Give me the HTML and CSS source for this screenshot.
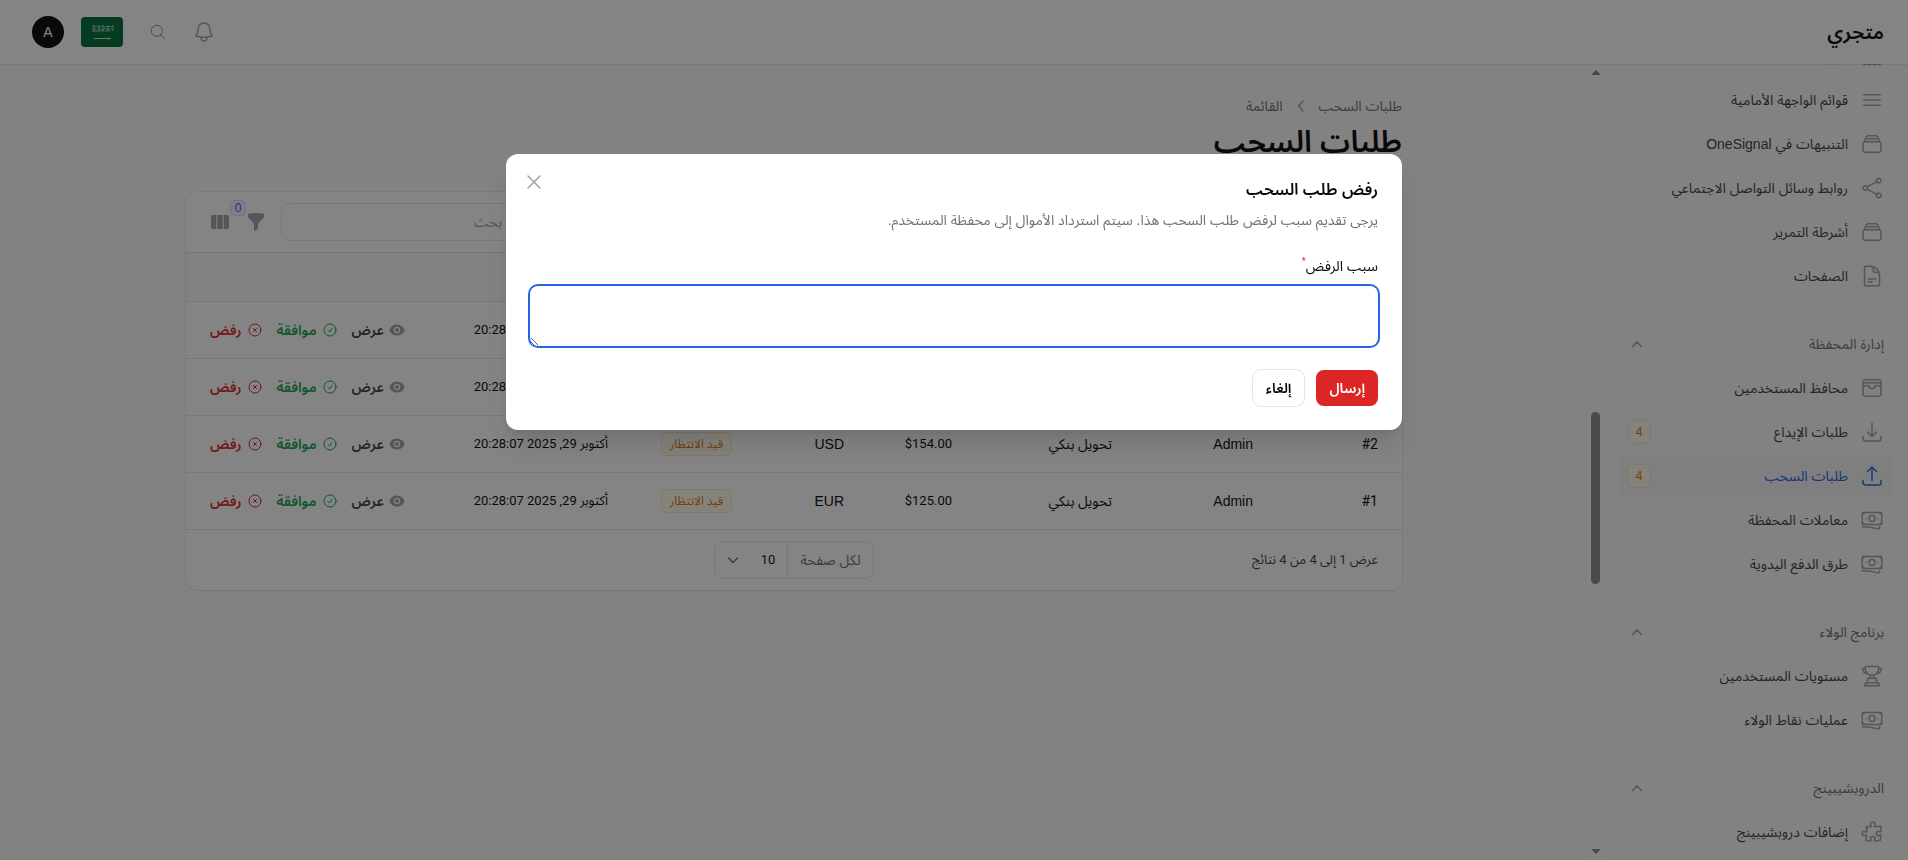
FILE: index.html
```html
<!DOCTYPE html>
<html lang="ar" dir="rtl">
<head>
  <meta charset="UTF-8">
  <meta name="viewport" content="width=device-width, initial-scale=1.0">
  <title>طلبات السحب - متجري</title>
  <link rel="stylesheet" href="styles.css">
</head>
<body>
  <svg class="sprite" aria-hidden="true">
    <symbol id="i-ticket" viewBox="0 0 24 24"><path d="M4 3.5h16v17.4l-2.7-1.3-2.7 1.5-2.6-1.5-2.6 1.5-2.7-1.5L4 20.9z"/></symbol>
    <symbol id="i-bars" viewBox="0 0 24 24"><path d="M3.75 6.75h16.5M3.75 12h16.5m-16.5 5.25h16.5"/></symbol>
    <symbol id="i-stack" viewBox="0 0 24 24"><path d="M6 6.878V6a2.25 2.25 0 012.25-2.25h7.5A2.25 2.25 0 0118 6v.878m-12 0c.235-.083.487-.128.75-.128h10.5c.263 0 .515.045.75.128m-12 0A2.25 2.25 0 004.5 9v.878m13.5-3A2.25 2.25 0 0119.5 9v.878m0 0a2.246 2.246 0 00-.75-.128H5.25c-.263 0-.515.045-.75.128m15 0A2.25 2.25 0 0121 12v6a2.25 2.25 0 01-2.25 2.25H5.25A2.25 2.25 0 013 18v-6c0-.98.626-1.813 1.5-2.122"/></symbol>
    <symbol id="i-share" viewBox="0 0 24 24"><path d="M7.217 10.907a2.25 2.25 0 100 2.186m0-2.186c.18.324.283.696.283 1.093s-.103.77-.283 1.093m0-2.186l9.566-5.314m-9.566 7.5l9.566 5.314m0 0a2.25 2.25 0 103.935 2.186 2.25 2.25 0 00-3.935-2.186zm0-12.814a2.25 2.25 0 103.933-2.185 2.25 2.25 0 00-3.933 2.185z"/></symbol>
    <symbol id="i-document" viewBox="0 0 24 24"><path d="M19.5 14.25v-2.625a3.375 3.375 0 00-3.375-3.375h-1.5A1.125 1.125 0 0113.5 7.125v-1.5a3.375 3.375 0 00-3.375-3.375H8.25m0 12.75h7.5m-7.5 3H12M10.5 2.25H5.625c-.621 0-1.125.504-1.125 1.125v17.25c0 .621.504 1.125 1.125 1.125h12.75c.621 0 1.125-.504 1.125-1.125V11.25a9 9 0 00-9-9z"/></symbol>
    <symbol id="i-wallet" viewBox="0 0 24 24"><path d="M21 12a2.25 2.25 0 00-2.25-2.25H15a3 3 0 11-6 0H5.25A2.25 2.25 0 003 12m18 0v6a2.25 2.25 0 01-2.25 2.25H5.25A2.25 2.25 0 013 18v-6m18 0V9M3 12V9m18 0a2.25 2.25 0 00-2.25-2.25H5.25A2.25 2.25 0 003 9m18 0V6a2.25 2.25 0 00-2.25-2.25H5.25A2.25 2.25 0 003 6v3"/></symbol>
    <symbol id="i-download" viewBox="0 0 24 24"><path d="M3 16.5v2.25A2.25 2.25 0 005.25 21h13.5A2.25 2.25 0 0021 18.75V16.5M16.5 12L12 16.5m0 0L7.5 12m4.5 4.5V3"/></symbol>
    <symbol id="i-upload" viewBox="0 0 24 24"><path d="M3 16.5v2.25A2.25 2.25 0 005.25 21h13.5A2.25 2.25 0 0021 18.75V16.5m-13.5-9L12 3m0 0l4.5 4.5M12 3v13.5"/></symbol>
    <symbol id="i-banknotes" viewBox="0 0 24 24"><path d="M2.25 18.75a60.07 60.07 0 0115.797 2.101c.727.198 1.453-.342 1.453-1.096V18.75M3.75 4.5v.75A.75.75 0 013 6h-.75m0 0v-.375c0-.621.504-1.125 1.125-1.125H20.25M2.25 6v9m18-10.5v.75c0 .414.336.75.75.75h.75m-1.5-1.5h.375c.621 0 1.125.504 1.125 1.125v9.75c0 .621-.504 1.125-1.125 1.125h-.375m1.5-1.5H21a.75.75 0 00-.75.75v.75m0 0H3.75m0 0h-.375a1.125 1.125 0 01-1.125-1.125V15m1.5 1.5v-.75A.75.75 0 003 15h-.75M15 10.5a3 3 0 11-6 0 3 3 0 016 0zm3 0h.008v.008H18V10.5zm-12 0h.008v.008H6V10.5z"/></symbol>
    <symbol id="i-trophy" viewBox="0 0 24 24"><path d="M16.5 18.75h-9m9 0a3 3 0 013 3h-15a3 3 0 013-3m9 0v-3.375c0-.621-.503-1.125-1.125-1.125h-.871M7.5 18.75v-3.375c0-.621.504-1.125 1.125-1.125h.872m5.007 0H9.497m5.007 0a7.454 7.454 0 01-.982-3.172M9.497 14.25a7.454 7.454 0 00.981-3.172M5.25 4.236c-.982.143-1.954.317-2.916.52A6.003 6.003 0 007.73 9.728M5.25 4.236V4.5c0 2.108.966 3.99 2.48 5.228M5.25 4.236V2.721C7.456 2.41 9.71 2.25 12 2.25c2.291 0 4.545.16 6.75.47v1.516M7.73 9.728a6.726 6.726 0 002.748 1.35m8.272-6.842V4.5c0 2.108-.966 3.99-2.48 5.228m2.48-5.492a46.32 46.32 0 012.916.52 6.003 6.003 0 01-5.395 4.972m0 0a6.726 6.726 0 01-2.749 1.35m0 0a6.772 6.772 0 01-3.044 0"/></symbol>
    <symbol id="i-puzzle" viewBox="0 0 24 24"><path d="M14.25 6.087c0-.355.186-.676.401-.959.221-.29.349-.634.349-1.003 0-1.036-1.007-1.875-2.25-1.875s-2.25.84-2.25 1.875c0 .369.128.713.349 1.003.215.283.401.604.401.959v0a.64.64 0 01-.657.643 48.39 48.39 0 01-4.163-.3c.186 1.613.293 3.25.315 4.907a.656.656 0 01-.658.663v0c-.355 0-.676-.186-.959-.401a1.647 1.647 0 00-1.003-.349c-1.036 0-1.875 1.007-1.875 2.25s.84 2.25 1.875 2.25c.369 0 .713-.128 1.003-.349.283-.215.604-.401.959-.401v0c.31 0 .555.26.532.57a48.039 48.039 0 01-.642 5.056c1.518.19 3.058.309 4.616.354a.64.64 0 00.657-.643v0c0-.355-.186-.676-.401-.959a1.647 1.647 0 01-.349-1.003c0-1.035 1.008-1.875 2.25-1.875 1.243 0 2.25.84 2.25 1.875 0 .369-.128.713-.349 1.003-.215.283-.4.604-.4.959v0c0 .333.277.599.61.58a48.1 48.1 0 005.427-.63 48.05 48.05 0 00.582-4.717.532.532 0 00-.533-.57v0c-.355 0-.676.186-.959.401-.29.221-.634.349-1.003.349-1.035 0-1.875-1.007-1.875-2.25s.84-2.25 1.875-2.25c.37 0 .713.128 1.003.349.283.215.604.401.96.401v0a.656.656 0 00.658-.663 48.422 48.422 0 00-.37-5.36c-1.886.342-3.81.574-5.766.689a.578.578 0 01-.61-.58v0z"/></symbol>
    <symbol id="i-bell" viewBox="0 0 24 24"><path d="M14.857 17.082a23.848 23.848 0 005.454-1.31A8.967 8.967 0 0118 9.75v-.7V9A6 6 0 006 9v.75a8.967 8.967 0 01-2.312 6.022c1.733.64 3.56 1.085 5.455 1.31m5.714 0a24.255 24.255 0 01-5.714 0m5.714 0a3 3 0 11-5.714 0"/></symbol>
    <symbol id="i-search" viewBox="0 0 24 24"><path d="M21 21l-5.197-5.197m0 0A7.5 7.5 0 105.196 5.196a7.5 7.5 0 0010.607 10.607z"/></symbol>
    <symbol id="i-check" viewBox="0 0 24 24"><path d="M9 12.75L11.25 15 15 9.75M21 12a9 9 0 11-18 0 9 9 0 0118 0z"/></symbol>
    <symbol id="i-reject" viewBox="0 0 24 24"><path d="M9.75 9.75l4.5 4.5m0-4.5l-4.5 4.5M21 12a9 9 0 11-18 0 9 9 0 0118 0z"/></symbol>
    <symbol id="i-close" viewBox="0 0 24 24"><path d="M6 18L18 6M6 6l12 12"/></symbol>
    <symbol id="i-up" viewBox="0 0 20 20"><path d="M5.5 12.5L10 8l4.5 4.5"/></symbol>
    <symbol id="i-down" viewBox="0 0 20 20"><path d="M5.5 8L10 12.5 14.5 8"/></symbol>
    <symbol id="i-left" viewBox="0 0 20 20"><path d="M12 5l-4.500 5 4.500 5"/></symbol>
    <symbol id="i-eye" viewBox="0 0 20 20"><path d="M10 12.5a2.5 2.5 0 100-5 2.5 2.5 0 000 5z"/><path fill-rule="evenodd" d="M.664 10.59a1.651 1.651 0 010-1.186A10.004 10.004 0 0110 3c4.257 0 7.893 2.66 9.336 6.41.147.381.146.804 0 1.186A10.004 10.004 0 0110 17c-4.257 0-7.893-2.66-9.336-6.41zM14 10a4 4 0 11-8 0 4 4 0 018 0z"/></symbol>
    <symbol id="i-funnel" viewBox="0 0 20 20"><path d="M2.628 1.601C5.028 1.206 7.49 1 10 1s4.973.206 7.372.601a.75.75 0 01.628.74v2.288a2.25 2.25 0 01-.659 1.59l-4.682 4.683a2.25 2.25 0 00-.659 1.59v3.037c0 .684-.31 1.33-.844 1.757l-1.937 1.55A.75.75 0 018 18.25v-5.757a2.25 2.25 0 00-.659-1.591L2.659 6.22A2.25 2.25 0 012 4.629V2.34a.75.75 0 01.628-.74z"/></symbol>
    <symbol id="i-columns" viewBox="0 0 20 20"><path d="M2.500 3H6.300v14H2.500A1.500 1.500 0 011 15.500v-11A1.500 1.500 0 012.500 3zM7.300 3h5.400v14h-5.400zM13.700 3h3.800A1.500 1.500 0 0119 4.500v11a1.500 1.500 0 01-1.500 1.500h-3.800z"/></symbol>
  </svg>

  <header class="topbar">
    <a class="brand" href="#">متجري</a>
    <div class="topbar-tools">
      <button class="icon-btn" aria-label="الإشعارات"><svg class="icon"><use href="#i-bell"/></svg></button>
      <button class="icon-btn" aria-label="بحث"><svg class="icon icon-search"><use href="#i-search"/></svg></button>
      <button class="flag" aria-label="العربية">
        <svg viewBox="0 0 42 30">
          <rect width="42" height="30" fill="#006c35"/>
          <path d="M11 8.500c1 2 2-1 3 1s2-2 3 0 2-1 3 0 2-2 3 0 2-1 3 0 2-1 3 0 2-1 3 0M11 12c1 1 2-1 3 0s2 2 3 0 2 1 3 0 2 2 3 0 2 1 3 0 2 1 3 0 2 1 3 0M11 14c1 1 2-1 3 0s2 1 3 0 2 1 3 0 2 1 3 0 2 1 3 0 2 1 3 0M13 8v6M18 8v6M22 8v6M27 8v6M32 8v6" fill="none" stroke="#fff" stroke-width=".6"/>
          <path d="M13 21.500h14m0-1v2m0-1h3" fill="none" stroke="#fff" stroke-width=".8"/>
        </svg>
      </button>
      <button class="avatar">A</button>
    </div>
  </header>

  <div class="layout">
    <aside class="sidebar">
      <nav class="nav">
        <ul class="nav-items">
          <li><a href="#"><svg class="icon"><use href="#i-ticket"/></svg>كوبونات</a></li>
          <li><a href="#"><svg class="icon"><use href="#i-bars"/></svg>قوائم الواجهة الأمامية</a></li>
          <li><a href="#"><svg class="icon"><use href="#i-stack"/></svg>التنبيهات في OneSignal</a></li>
          <li><a href="#"><svg class="icon"><use href="#i-share"/></svg>روابط وسائل التواصل الاجتماعي</a></li>
          <li><a href="#"><svg class="icon"><use href="#i-stack"/></svg>أشرطة التمرير</a></li>
          <li><a href="#"><svg class="icon"><use href="#i-document"/></svg>الصفحات</a></li>
        </ul>
        <section>
          <button class="nav-title">إدارة المحفظة<svg class="chevron"><use href="#i-up"/></svg></button>
          <ul class="nav-items">
            <li><a href="#"><svg class="icon"><use href="#i-wallet"/></svg>محافظ المستخدمين</a></li>
            <li><a href="#"><svg class="icon"><use href="#i-download"/></svg>طلبات الإيداع<span class="count">4</span></a></li>
            <li><a href="#" class="active"><svg class="icon"><use href="#i-upload"/></svg>طلبات السحب<span class="count">4</span></a></li>
            <li><a href="#"><svg class="icon"><use href="#i-banknotes"/></svg>معاملات المحفظة</a></li>
            <li><a href="#"><svg class="icon"><use href="#i-banknotes"/></svg>طرق الدفع اليدوية</a></li>
          </ul>
        </section>
        <section>
          <button class="nav-title">برنامج الولاء<svg class="chevron"><use href="#i-up"/></svg></button>
          <ul class="nav-items">
            <li><a href="#"><svg class="icon"><use href="#i-trophy"/></svg>مستويات المستخدمين</a></li>
            <li><a href="#"><svg class="icon"><use href="#i-banknotes"/></svg>عمليات نقاط الولاء</a></li>
          </ul>
        </section>
        <section>
          <button class="nav-title">الدروبشيبينج<svg class="chevron"><use href="#i-up"/></svg></button>
          <ul class="nav-items">
            <li><a href="#"><svg class="icon"><use href="#i-puzzle"/></svg>إضافات دروبشيبينج</a></li>
          </ul>
        </section>
      </nav>
      <div class="scrollbar" aria-hidden="true">
        <span class="arrow arrow-up"></span>
        <span class="track"><span class="thumb"></span></span>
        <span class="arrow arrow-down"></span>
      </div>
    </aside>

    <main class="main">
      <div class="content">
        <nav class="breadcrumbs">
          <a href="#">طلبات السحب</a>
          <svg class="chevron"><use href="#i-left"/></svg>
          <a href="#">القائمة</a>
        </nav>
        <h1>طلبات السحب</h1>

        <div class="card">
          <div class="toolbar">
            <input type="search" class="search" placeholder="بحث" aria-label="بحث">
            <button class="tool-btn" aria-label="تصفية"><svg class="solid"><use href="#i-funnel"/></svg><span class="tool-count">0</span></button>
            <button class="tool-btn" aria-label="الأعمدة"><svg class="solid"><use href="#i-columns"/></svg></button>
          </div>
          <table>
            <thead>
              <tr>
                <th class="c-id">#</th>
                <th class="c-user">المستخدم</th>
                <th class="c-method">الطريقة</th>
                <th class="c-amount">المبلغ</th>
                <th class="c-currency">العملة</th>
                <th class="c-status">الحالة</th>
                <th class="c-date"><span class="sort">تاريخ الإنشاء<svg class="chevron"><use href="#i-down"/></svg></span></th>
                <th></th>
              </tr>
            </thead>
            <tbody id="rows"></tbody>
          </table>
          <div class="pager">
            <span class="pager-info">عرض 1 إلى 4 من 4 نتائج</span>
            <div class="per-page">
              <label for="per-page">لكل صفحة</label>
              <div class="select">
                <select id="per-page"><option>10</option><option>25</option><option>50</option></select>
                <svg class="chevron"><use href="#i-down"/></svg>
              </div>
            </div>
          </div>
        </div>
      </div>
    </main>
  </div>

  <div class="overlay">
    <div class="modal" role="dialog" aria-modal="true" aria-labelledby="modal-title">
      <button class="modal-close" aria-label="إغلاق"><svg class="icon"><use href="#i-close"/></svg></button>
      <h2 id="modal-title">رفض طلب السحب</h2>
      <p class="modal-text">يرجى تقديم سبب لرفض طلب السحب هذا. سيتم استرداد الأموال إلى محفظة المستخدم.</p>
      <form>
        <label for="reason">سبب الرفض<sup>*</sup></label>
        <textarea id="reason"></textarea>
        <div class="modal-actions">
          <button type="button" class="btn btn-danger">إرسال</button>
          <button type="button" class="btn btn-plain">إلغاء</button>
        </div>
      </form>
    </div>
  </div>

  <script>
    const requests = [
      { id: 4, amount: '$200.00', currency: 'USD' },
      { id: 3, amount: '$180.00', currency: 'EUR' },
      { id: 2, amount: '$154.00', currency: 'USD' },
      { id: 1, amount: '$125.00', currency: 'EUR' }
    ];
    document.getElementById('rows').innerHTML = requests.map(r => `
      <tr>
        <td><bdi dir="ltr">#${r.id}</bdi></td>
        <td class="latin">Admin</td>
        <td>تحويل بنكي</td>
        <td class="amount"><bdi dir="ltr">${r.amount}</bdi></td>
        <td class="latin">${r.currency}</td>
        <td><span class="badge">قيد الانتظار</span></td>
        <td class="date">أكتوبر 29, 2025 20:28:07</td>
        <td>
          <div class="actions">
            <a href="#" class="view"><svg class="solid"><use href="#i-eye"/></svg>عرض</a>
            <a href="#" class="approve"><svg class="icon"><use href="#i-check"/></svg>موافقة</a>
            <a href="#" class="reject"><svg class="icon"><use href="#i-reject"/></svg>رفض</a>
          </div>
        </td>
      </tr>`).join('');
  </script>
</body>
</html>
```
FILE: styles.css
```css
* {
  box-sizing: border-box;
}
body {
  margin: 0;
  min-height: 100vh;
  overflow: hidden;
  font-family: "Liberation Sans", "Noto Sans Arabic", "DejaVu Sans Condensed", "DejaVu Sans", sans-serif;
  font-size: 14px;
  line-height: 20px;
  background: #fafafa;
  color: #09090b;
}
a {
  color: inherit;
  text-decoration: none;
}
button,
input,
select,
textarea {
  font: inherit;
  color: inherit;
}
button {
  padding: 0;
  border: none;
  background: none;
  cursor: pointer;
}
ul {
  list-style: none;
  margin: 0;
  padding: 0;
}
.sprite {
  display: none;
}
.icon,
.chevron {
  flex: none;
  width: 24px;
  height: 24px;
  fill: none;
  stroke: currentColor;
  stroke-width: 1.5;
  stroke-linecap: round;
  stroke-linejoin: round;
}
.chevron {
  width: 20px;
  height: 20px;
}
.solid {
  flex: none;
  width: 20px;
  height: 20px;
  fill: currentColor;
}

/* top bar */
.topbar {
  position: relative;
  display: flex;
  align-items: center;
  justify-content: space-between;
  height: 64px;
  padding: 0 24px 0 32px;
  background: #fff;
  box-shadow: 0 0 0 1px rgba(9, 9, 11, .05), 0 1px 2px rgba(0, 0, 0, .05);
}
.brand {
  font-size: 20px;
  line-height: 28px;
  font-weight: 600;
}
.topbar-tools {
  display: flex;
  align-items: center;
  gap: 17px;
}
.icon-btn {
  display: flex;
  align-items: center;
  justify-content: center;
  width: 36px;
  height: 36px;
  color: #a1a1aa;
}
.icon-btn + .icon-btn {
  margin-right: -7px;
  color: #71717a;
}
.icon-search {
  width: 18px;
  height: 18px;
  stroke-width: 1;
}
.flag {
  width: 42px;
  height: 30px;
  overflow: hidden;
  border-radius: 4px;
}
.flag svg {
  display: block;
}
.avatar {
  width: 32px;
  height: 32px;
  border-radius: 50%;
  background: #09090b;
  color: #fff;
}

/* sidebar */
.layout {
  display: flex;
  height: calc(100vh - 64px);
}
.sidebar {
  display: flex;
  flex: none;
  width: 320px;
  overflow: hidden;
}
.nav {
  flex: 1;
  display: flex;
  flex-direction: column;
  gap: 28px;
  margin-top: -28px;
  padding: 0 16px;
}
.nav-items {
  display: flex;
  flex-direction: column;
  gap: 4px;
}
.nav-items a {
  display: flex;
  align-items: center;
  gap: 12px;
  height: 40px;
  padding: 0 8px;
  border-radius: 8px;
  color: #3f3f46;
}
.nav-items .icon {
  color: #a1a1aa;
}
.nav-items .active,
.nav-items .active .icon {
  color: #2563eb;
}
.nav-items .active {
  background: #f4f4f5;
}
.nav-title {
  display: flex;
  align-items: center;
  justify-content: space-between;
  width: 100%;
  height: 40px;
  margin-bottom: 4px;
  padding: 0 8px;
  color: #71717a;
}
.nav-title .chevron {
  color: #a1a1aa;
}
.count {
  width: 24px;
  margin-right: auto;
  border-radius: 6px;
  background: #fffbeb;
  box-shadow: inset 0 0 0 1px rgba(217, 119, 6, .15);
  color: #d97706;
  font-size: 12px;
  line-height: 24px;
  text-align: center;
}
.scrollbar {
  display: flex;
  flex-direction: column;
  align-items: center;
  width: 15px;
  padding: 6px 0;
  background: #fcfcfc;
}
.track {
  flex: 1;
  display: flex;
  flex-direction: column;
}
.track::before {
  content: "";
  flex: 337;
}
.track::after {
  content: "";
  flex: 265;
}
.thumb {
  flex: 171;
  width: 9px;
  border-radius: 5px;
  background: #8b8b8b;
}
.arrow {
  border: 5px solid transparent;
}
.arrow-up {
  border-top-width: 0;
  border-bottom-color: #8b8b8b;
}
.arrow-down {
  border-bottom-width: 0;
  border-top-color: #8b8b8b;
}

/* page */
.main {
  flex: 1;
  min-width: 0;
  padding: 32px;
}
.content {
  max-width: 1216px;
  margin: 0 auto;
}
.breadcrumbs {
  display: flex;
  align-items: center;
  gap: 8px;
  color: #71717a;
}
.breadcrumbs .chevron {
  color: #a1a1aa;
}
h1 {
  margin: 8px 0 32px;
  font-size: 30px;
  line-height: 36px;
  font-weight: 600;
}
.card {
  border-radius: 12px;
  background: #fff;
  box-shadow: 0 0 0 1px rgba(9, 9, 11, .05), 0 1px 2px rgba(0, 0, 0, .05);
}
.toolbar {
  display: flex;
  align-items: center;
  justify-content: flex-end;
  gap: 16px;
  height: 60px;
  padding: 0 24px;
}
.search {
  width: 256px;
  height: 36px;
  padding: 0 36px 0 12px;
  border: none;
  border-radius: 8px;
  background: #fff;
  box-shadow: 0 0 0 1px rgba(9, 9, 11, .1);
}
.search::placeholder {
  color: #a1a1aa;
}
.tool-btn {
  position: relative;
  display: flex;
  color: #a1a1aa;
}
.tool-count {
  position: absolute;
  top: -12px;
  left: -16px;
  width: 16px;
  border-radius: 5px;
  background: #eff6ff;
  box-shadow: inset 0 0 0 1px rgba(37, 99, 235, .15);
  color: #2563eb;
  font-size: 12px;
  line-height: 16px;
}

table {
  width: 100%;
  table-layout: fixed;
  border-collapse: collapse;
}
th,
td {
  padding: 0 12px;
  border: solid #e4e4e7;
  border-width: 1px 0;
  text-align: right;
  white-space: nowrap;
}
th {
  height: 49px;
  background: #fafafa;
}
td {
  height: 57px;
  font-family: Roboto, "Noto Sans Arabic", "DejaVu Sans Condensed", "DejaVu Sans", sans-serif;
}
tr > :first-child {
  padding-right: 24px;
}
tr > :last-child {
  padding-left: 24px;
}
.latin {
  font-family: "Liberation Sans", Roboto, sans-serif;
}
.amount,
.date,
.pager-info {
  font-family: Roboto, "Noto Sans Arabic", "DejaVu Sans Condensed", "DejaVu Sans", sans-serif;
  font-size: 13px;
}
.c-id { width: 137px; }
.c-user { width: 141px; }
.c-method { width: 160px; }
.c-amount { width: 108px; }
.c-currency { width: 112px; }
.c-status { width: 124px; }
.c-date { width: 180px; }
.sort {
  display: flex;
  align-items: center;
  gap: 8px;
}
.badge {
  display: inline-block;
  padding: 0 9px;
  border-radius: 6px;
  background: #fffbeb;
  box-shadow: inset 0 0 0 1px rgba(217, 119, 6, .15);
  color: #d97706;
  font-size: 12px;
  line-height: 24px;
}
.actions {
  display: flex;
  justify-content: flex-end;
  gap: 14px;
  font-weight: 600;
}
.actions a {
  display: flex;
  align-items: center;
  gap: 5px;
}
.actions svg {
  width: 16px;
  height: 16px;
}
.view { color: #3f3f46; }
.view svg { color: #a1a1aa; }
.approve { color: #16a34a; }
.reject { color: #dc2626; }

.pager {
  display: grid;
  grid-template-columns: 1fr auto 1fr;
  align-items: center;
  height: 60px;
  padding: 0 24px;
  color: #3f3f46;
}
.per-page {
  display: flex;
  align-items: center;
  height: 36px;
  border-radius: 8px;
  box-shadow: 0 0 0 1px rgba(9, 9, 11, .1);
}
.per-page label {
  padding: 0 12px;
  color: #71717a;
}
.select {
  display: flex;
  align-items: center;
  height: 36px;
  border-right: 1px solid #e4e4e7;
}
.select select {
  width: 72px;
  height: 36px;
  padding: 0 12px 0 36px;
  border: none;
  background: none;
  appearance: none;
  color: #09090b;
  font-family: Roboto, sans-serif;
  font-size: 13px;
}
.select .chevron {
  margin-right: -28px;
  margin-left: 8px;
  color: #71717a;
}

/* reject dialog */
.overlay {
  position: fixed;
  inset: 0;
  display: grid;
  grid-template-rows: 1fr auto 3fr;
  justify-items: center;
  padding: 16px;
  background: rgba(9, 9, 11, .5);
}
.modal {
  position: relative;
  grid-row: 2;
  width: 100%;
  max-width: 896px;
  padding: 24px;
  border-radius: 12px;
  background: #fff;
  box-shadow: 0 20px 25px -5px rgba(0, 0, 0, .1), 0 8px 10px -6px rgba(0, 0, 0, .1);
}
.modal-close {
  position: absolute;
  top: 16px;
  left: 16px;
  color: #a1a1aa;
}
.modal h2 {
  margin: 0;
  font-size: 16px;
  line-height: 24px;
  font-weight: 600;
}
.modal-text {
  margin: 8px 0 24px;
  color: #71717a;
}
.modal label {
  display: block;
  height: 24px;
  line-height: 24px;
}
.modal sup {
  color: #dc2626;
  font-size: 10px;
  line-height: 0;
}
.modal textarea {
  display: block;
  width: 100%;
  height: 60px;
  margin: 8px 0 24px;
  padding: 6px 12px;
  border: none;
  border-radius: 8px;
  outline: none;
  box-shadow: 0 0 0 2px #2563eb;
}
.modal-actions {
  display: flex;
  gap: 12px;
}
.btn {
  height: 36px;
  padding: 0 13px;
  border-radius: 8px;
  font-weight: 600;
}
.btn-danger {
  background: #dc2626;
  color: #fff;
}
.btn-plain {
  box-shadow: 0 0 0 1px rgba(9, 9, 11, .1);
}
```
